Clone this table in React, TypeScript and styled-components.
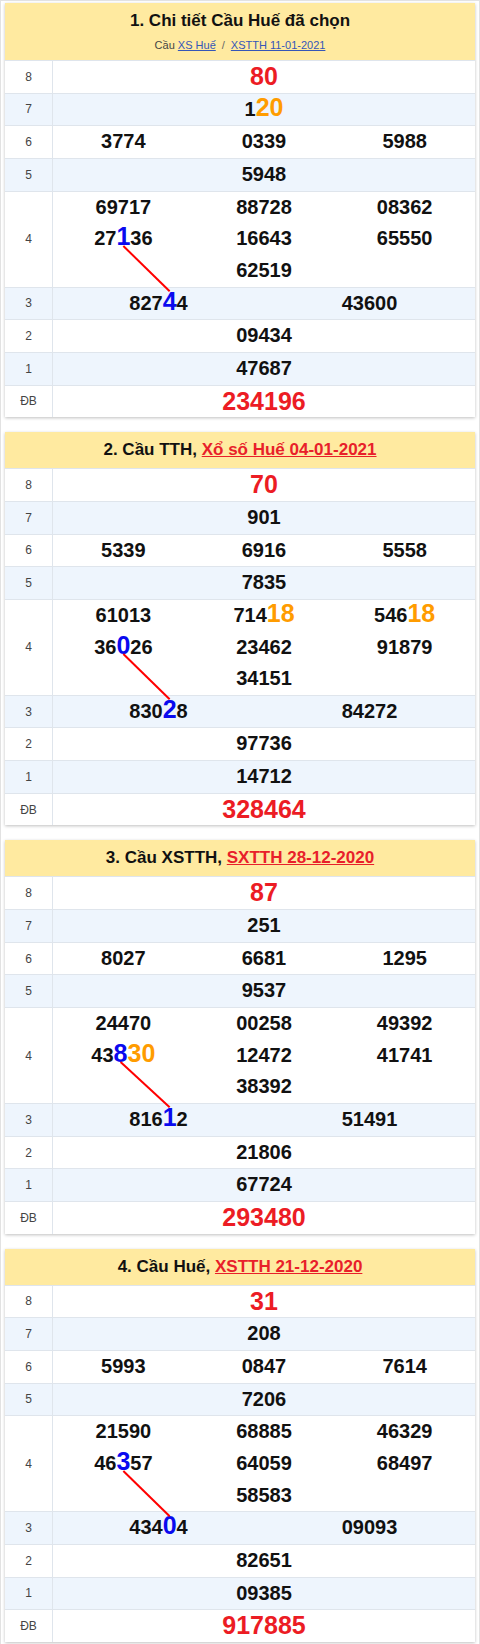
import React, { useLayoutEffect, useRef, useState } from "react";
import styled, { createGlobalStyle } from "styled-components";

const GlobalStyle = createGlobalStyle`
  * { box-sizing: border-box; }
  html, body { margin: 0; padding: 0; background: #fff; }
  body { font-family: "Liberation Sans", Arial, sans-serif; color: #111; }
`;

const Page = styled.div`
  display: flex;
  flex-direction: column;
  gap: 15px;
  padding: 2px 4px 3px;
  border: 1px solid #e2e2e2;
  border-bottom: none;
  min-height: 1644px;
`;

const Card = styled.section`
  position: relative;
  background: #fff;
  box-shadow: 0 1px 3px rgba(0, 0, 0, 0.25);
`;

const Header = styled.header`
  background: #ffeaa0;
  padding: 7px 8px;
  text-align: center;
`;

const Title = styled.h2`
  margin: 0;
  font-size: 17px;
  line-height: 22px;
  font-weight: 700;
  color: #111;
`;

const TitleLink = styled.a`
  color: #e8202a;
  text-decoration: underline;
`;

const Sub = styled.div`
  margin-top: 4px;
  margin-bottom: -1px;
  font-size: 11px;
  line-height: 18px;
  color: #444;
`;

const SubLink = styled.a`
  color: #3556b8;
  text-decoration: underline;
`;

const Sep = styled.span`
  margin: 0 6px;
  color: #666;
`;

const Row = styled.div<{ $alt: boolean }>`
  display: grid;
  grid-template-columns: 48px 1fr;
  background: ${(p) => (p.$alt ? "#eef5fd" : "#fff")};
  border-top: 1px solid #dfe5ec;
`;

const Label = styled.div`
  display: flex;
  align-items: center;
  justify-content: center;
  font-size: 12px;
  color: #444;
  border-right: 1px solid #dfe5ec;
`;

const Numbers = styled.div`
  display: flex;
  flex-wrap: wrap;
  justify-content: center;
  align-items: center;
`;

const Num = styled.div<{ $cols: number; $red?: boolean }>`
  width: ${(p) => 100 / p.$cols}%;
  text-align: center;
  font-weight: 700;
  font-size: ${(p) => (p.$red ? 25 : 20)}px;
  line-height: 31.65px;
  color: ${(p) => (p.$red ? "#ec1c24" : "#111")};
`;

const Blue = styled.span`
  color: #0a0aef;
  font-size: 25px;
  line-height: 1;
`;

const Orange = styled.span`
  color: #ff9c00;
  font-size: 25px;
  line-height: 1;
`;

const Overlay = styled.svg`
  position: absolute;
  left: 0;
  top: 0;
  width: 100%;
  height: 100%;
  pointer-events: none;
  overflow: visible;
`;

type RowData = { label: string; cols: number; nums: string[]; red?: boolean };
type CardData = {
  title: React.ReactNode;
  sub?: boolean;
  rows: RowData[];
};

function renderNum(s: string) {
  const out: React.ReactNode[] = [];
  const re = /\{([^}]*)\}|\[([^\]]*)\]|([^{[]+)/g;
  let m: RegExpExecArray | null;
  let i = 0;
  while ((m = re.exec(s))) {
    if (m[1] !== undefined) out.push(<Blue key={i} data-hi="1">{m[1]}</Blue>);
    else if (m[2] !== undefined) out.push(<Orange key={i}>{m[2]}</Orange>);
    else out.push(<React.Fragment key={i}>{m[3]}</React.Fragment>);
    i++;
  }
  return out;
}

function makeRows(
  r8: string,
  r7: string,
  r6: string[],
  r5: string,
  r4: string[],
  r3: string[],
  r2: string,
  r1: string,
  db: string
): RowData[] {
  return [
    { label: "8", cols: 1, nums: [r8], red: true },
    { label: "7", cols: 1, nums: [r7] },
    { label: "6", cols: 3, nums: r6 },
    { label: "5", cols: 1, nums: [r5] },
    { label: "4", cols: 3, nums: r4 },
    { label: "3", cols: 2, nums: r3 },
    { label: "2", cols: 1, nums: [r2] },
    { label: "1", cols: 1, nums: [r1] },
    { label: "ĐB", cols: 1, nums: [db], red: true },
  ];
}

const cards: CardData[] = [
  {
    title: "1. Chi tiết Cầu Huế đã chọn",
    sub: true,
    rows: makeRows(
      "80",
      "1[20]",
      ["3774", "0339", "5988"],
      "5948",
      ["69717", "88728", "08362", "27{1}36", "16643", "65550", "62519"],
      ["827{4}4", "43600"],
      "09434",
      "47687",
      "234196"
    ),
  },
  {
    title: (
      <>
        2. Cầu TTH, <TitleLink href="#">Xổ số Huế 04-01-2021</TitleLink>
      </>
    ),
    rows: makeRows(
      "70",
      "901",
      ["5339", "6916", "5558"],
      "7835",
      ["61013", "714[18]", "546[18]", "36{0}26", "23462", "91879", "34151"],
      ["830{2}8", "84272"],
      "97736",
      "14712",
      "328464"
    ),
  },
  {
    title: (
      <>
        3. Cầu XSTTH, <TitleLink href="#">SXTTH 28-12-2020</TitleLink>
      </>
    ),
    rows: makeRows(
      "87",
      "251",
      ["8027", "6681", "1295"],
      "9537",
      ["24470", "00258", "49392", "43{8}[30]", "12472", "41741", "38392"],
      ["816{1}2", "51491"],
      "21806",
      "67724",
      "293480"
    ),
  },
  {
    title: (
      <>
        4. Cầu Huế, <TitleLink href="#">XSTTH 21-12-2020</TitleLink>
      </>
    ),
    rows: makeRows(
      "31",
      "208",
      ["5993", "0847", "7614"],
      "7206",
      ["21590", "68885", "46329", "46{3}57", "64059", "68497", "58583"],
      ["434{0}4", "09093"],
      "82651",
      "09385",
      "917885"
    ),
  },
];

type Line = { x1: number; y1: number; x2: number; y2: number };

function ResultCard({ data }: { data: CardData }) {
  const ref = useRef<HTMLElement>(null);
  const [line, setLine] = useState<Line | null>(null);

  useLayoutEffect(() => {
    const card = ref.current;
    if (!card) return;
    const his = card.querySelectorAll<HTMLElement>("[data-hi]");
    if (his.length < 2) return;
    const cr = card.getBoundingClientRect();
    const a = his[0].getBoundingClientRect();
    const b = his[1].getBoundingClientRect();
    const fs = 25;
    setLine({
      x1: a.left + a.width / 2 - cr.left,
      y1: a.bottom - 0.212 * fs - cr.top + 1,
      x2: b.left + b.width / 2 - cr.left,
      y2: b.top + 0.189 * fs - cr.top,
    });
  }, []);

  return (
    <Card ref={ref}>
      <Header>
        <Title>{data.title}</Title>
        {data.sub && (
          <Sub>
            Cầu <SubLink href="#">XS Huế</SubLink>
            <Sep>/</Sep>
            <SubLink href="#">XSTTH 11-01-2021</SubLink>
          </Sub>
        )}
      </Header>
      {data.rows.map((r, i) => (
        <Row key={r.label} $alt={i % 2 === 1}>
          <Label>{r.label}</Label>
          <Numbers>
            {r.nums.map((n, j) => (
              <Num key={j} $cols={r.cols} $red={r.red}>
                {renderNum(n)}
              </Num>
            ))}
          </Numbers>
        </Row>
      ))}
      {line && (
        <Overlay>
          <line
            x1={line.x1}
            y1={line.y1}
            x2={line.x2}
            y2={line.y2}
            stroke="#ff0000"
            strokeWidth={2}
          />
        </Overlay>
      )}
    </Card>
  );
}

export default function App() {
  return (
    <>
      <GlobalStyle />
      <Page>
        {cards.map((c, i) => (
          <ResultCard key={i} data={c} />
        ))}
      </Page>
    </>
  );
}
